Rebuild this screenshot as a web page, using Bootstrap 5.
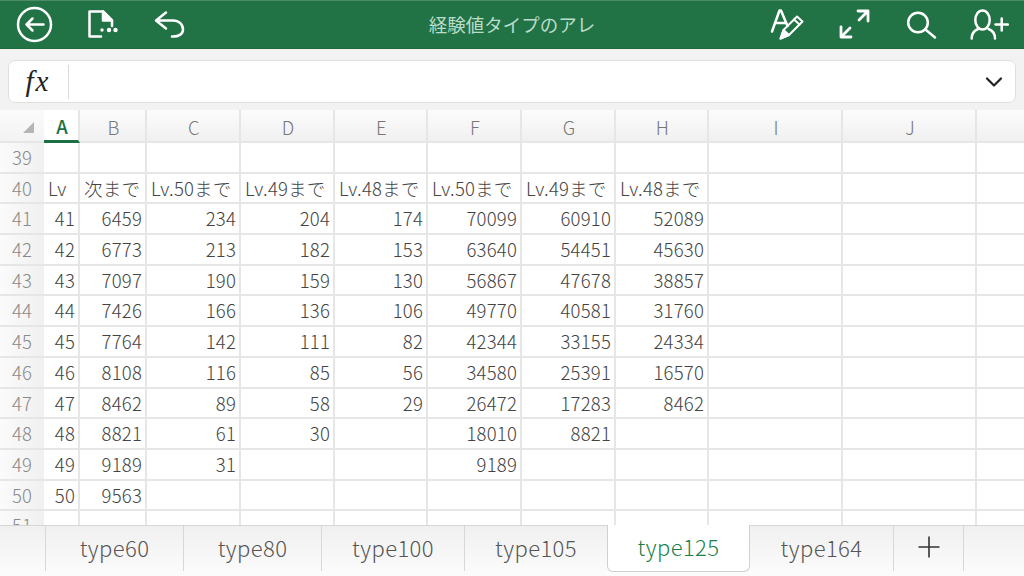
<!DOCTYPE html>
<html lang="ja">
<head>
<meta charset="utf-8">
<title>経験値タイプのアレ</title>
<link href="https://cdn.jsdelivr.net/npm/bootstrap@5.3.0/dist/css/bootstrap.min.css" rel="stylesheet">
<style>
html,body{height:576px;overflow:hidden;background:#fff}
body{font-family:"Noto Sans CJK JP","Noto Sans",sans-serif;font-weight:300;color:#444}
.xl-top{height:49px;background:#217346;border-top:1px solid #4d8c69;border-bottom:1px solid #1d6b3e;display:grid;grid-template-columns:1fr auto 1fr;align-items:center;flex:none}
.xl-left{gap:28px;padding-left:14px}
.xl-right{gap:27px;padding-right:15px}
.xl-ico{width:40px;height:40px;display:block;fill:none;stroke:#fff;stroke-width:2.5;stroke-linecap:round;stroke-linejoin:round}
.xl-title{font-size:18.5px;color:#bcdcc9;font-weight:400;line-height:1}
.xl-fbar{height:61px;background:#f2f2f2;padding:11px 8px 7px;flex:none}
.xl-fbox{height:43px;background:#fff;border:1px solid #dfdfdf;border-radius:7px}
.xl-fx{width:60px;height:34px;border-right:1px solid #d9d9d9;font:italic 29px/33px "Liberation Serif",serif;letter-spacing:2px;color:#222;text-align:center;padding-right:1px}
.xl-chev{width:20px;height:12px;margin-right:11px;fill:none;stroke:#222;stroke-width:2.2;stroke-linecap:round;stroke-linejoin:round}
.xl-grid{height:415px;overflow:hidden;flex:none}
.xl-sheet{table-layout:fixed;width:1100px;border-collapse:separate;border-spacing:0;margin:0;--bs-table-bg:transparent;font-size:18.5px;letter-spacing:.2px;color:#444}
.xl-sheet td,.xl-sheet th{height:30.7px;padding:0 3px 0 4px;border:0;border-right:2px solid #e6e6e6;border-bottom:2px solid #e6e6e6;line-height:28px;white-space:nowrap;overflow:hidden;font-weight:300;color:#444;box-shadow:none}
.xl-sheet thead th{height:33px;background:linear-gradient(#fcfcfc,#f0f0f0);color:#777;text-align:center;font-size:18.5px;padding:0 0 0 2px}
.xl-sheet thead th.xl-on{background:#fff;color:#1d7044;font-weight:500;border-bottom:3px solid #1d7044}
.xl-sheet tbody th{background:linear-gradient(90deg,#fbfbfb,#f0f0f0);color:#8a8a8a;text-align:center;border-right:0;padding:0;font-size:18.5px}
.xl-sheet thead th:first-child{border-right:0;background:linear-gradient(#fbfbfb,#f3f3f3);position:relative}
.xl-corner{position:absolute;left:23px;bottom:8px;width:0;height:0;border-style:solid;border-width:0 0 11px 11px;border-color:transparent transparent #b5b5b5 transparent}
.xl-c0{width:44px}.xl-c1{width:36px}.xl-c2{width:67px}.xl-c3,.xl-c4,.xl-c6,.xl-c7{width:94px}.xl-c5,.xl-c8{width:93px}.xl-c9{width:134px}.xl-c10{width:134px}.xl-c11{width:134px}
.xl-sheet td.xl-n{text-align:right}
.xl-tabs{height:51px;flex:none;background:linear-gradient(#f0f0f0,#fbfbfb 92%);border-top:1px solid #d6d6d6;padding-left:45px;position:relative;font-size:22px;color:#555;align-items:stretch}
.xl-tab{width:138px;height:45px;border-left:1px solid #d8d8d8;display:flex;align-items:center;justify-content:center;font-weight:300;letter-spacing:.4px;padding-bottom:3px}
.xl-w2{width:143px}
.xl-tab.xl-act{width:143px;height:47px;margin-top:-1px;background:#fff;color:#188048;font-weight:300;border:1px solid #d0d0d0;border-top:0;border-radius:0 0 6px 6px}
.xl-tab.xl-act + .xl-tab{border-left:0}
.xl-add{width:71px;border-right:1px solid #d8d8d8}
.xl-plus{width:24px;height:24px;stroke:#333;stroke-width:1.6;fill:none}
</style>
</head>
<body class="d-flex flex-column">
<header class="xl-top">
  <div class="d-flex xl-left">
    <svg class="xl-ico" viewBox="0 0 40 40"><circle cx="20.500" cy="19.500" r="16.500"/><path d="M29.500 19.500H12.500M18.500 13.500l-6 6 6 6"/></svg>
    <svg class="xl-ico" viewBox="0 0 40 40"><path d="M19 31.500H7.500V6.500H21L30 15.500V21"/><path d="M21 6.500V15.500H30Z" fill="#fff"/><circle cx="20" cy="25" r="1.700" fill="#fff" stroke="none"/><circle cx="27" cy="25" r="2.200" fill="#fff" stroke="none"/><circle cx="33.500" cy="25" r="2.200" fill="#fff" stroke="none"/></svg>
    <svg class="xl-ico" viewBox="0 0 40 40"><path d="M16 7.500L6 15.500l10 8M6 15.500H23c6 0 10 4 10 9 0 4.500-4.500 7.500-11 7"/></svg>
  </div>
  <div class="xl-title text-center">経験値タイプのアレ</div>
  <div class="d-flex justify-content-end xl-right">
    <svg class="xl-ico" viewBox="0 0 40 40"><path d="M4 26.500L11.500 5.500h1.500L19.500 21M7 18h10"/><path d="M12.500 33.500L15.500 25L29 11.500L34.500 16.500L21 30Z" stroke-width="2"/><path d="M12.500 33.500L15.500 25L21 30Z" fill="#fff" stroke-width="2"/><path d="M26 14.500l5.500 5" stroke-width="2"/></svg>
    <svg class="xl-ico" viewBox="0 0 40 40"><path d="M23 6H33V16M33 6L24 15M6 22V32H16M6 32L15 23" stroke-width="2.800"/></svg>
    <svg class="xl-ico" viewBox="0 0 40 40"><circle cx="16" cy="17.500" r="9.800"/><path d="M23.500 24.500L33 32.500"/></svg>
    <svg class="xl-ico" viewBox="0 0 40 40"><ellipse cx="13.500" cy="15" rx="7.200" ry="9.500"/><path d="M2.700 33.500c0-5.500 2.500-8 6.500-9.500M26 33.500c0-5.500-2.500-8-6.500-9.500"/><path d="M26.500 19.500h12.500M32.700 13.500v12"/></svg>
  </div>
</header>
<div class="xl-fbar">
  <div class="xl-fbox d-flex align-items-center justify-content-between">
    <div class="xl-fx">fx</div>
    <svg class="xl-chev" viewBox="0 0 20 12"><path d="M3 2.500l7 7 7-7"/></svg>
  </div>
</div>
<div class="xl-grid">
<table class="table xl-sheet">
<colgroup><col class="xl-c0"><col class="xl-c1"><col class="xl-c2"><col class="xl-c3"><col class="xl-c4"><col class="xl-c5"><col class="xl-c6"><col class="xl-c7"><col class="xl-c8"><col class="xl-c9"><col class="xl-c10"><col class="xl-c11"></colgroup>
<thead><tr><th><span class="xl-corner"></span></th><th class="xl-on">A</th><th>B</th><th>C</th><th>D</th><th>E</th><th>F</th><th>G</th><th>H</th><th>I</th><th>J</th><th></th></tr></thead>
<tbody>
<tr><th>39</th><td></td><td></td><td></td><td></td><td></td><td></td><td></td><td></td><td></td><td></td><td></td></tr>
<tr><th>40</th><td>Lv</td><td>次まで</td><td>Lv.50まで</td><td>Lv.49まで</td><td>Lv.48まで</td><td>Lv.50まで</td><td>Lv.49まで</td><td>Lv.48まで</td><td></td><td></td><td></td></tr>
<tr><th>41</th><td class="xl-n">41</td><td class="xl-n">6459</td><td class="xl-n">234</td><td class="xl-n">204</td><td class="xl-n">174</td><td class="xl-n">70099</td><td class="xl-n">60910</td><td class="xl-n">52089</td><td></td><td></td><td></td></tr>
<tr><th>42</th><td class="xl-n">42</td><td class="xl-n">6773</td><td class="xl-n">213</td><td class="xl-n">182</td><td class="xl-n">153</td><td class="xl-n">63640</td><td class="xl-n">54451</td><td class="xl-n">45630</td><td></td><td></td><td></td></tr>
<tr><th>43</th><td class="xl-n">43</td><td class="xl-n">7097</td><td class="xl-n">190</td><td class="xl-n">159</td><td class="xl-n">130</td><td class="xl-n">56867</td><td class="xl-n">47678</td><td class="xl-n">38857</td><td></td><td></td><td></td></tr>
<tr><th>44</th><td class="xl-n">44</td><td class="xl-n">7426</td><td class="xl-n">166</td><td class="xl-n">136</td><td class="xl-n">106</td><td class="xl-n">49770</td><td class="xl-n">40581</td><td class="xl-n">31760</td><td></td><td></td><td></td></tr>
<tr><th>45</th><td class="xl-n">45</td><td class="xl-n">7764</td><td class="xl-n">142</td><td class="xl-n">111</td><td class="xl-n">82</td><td class="xl-n">42344</td><td class="xl-n">33155</td><td class="xl-n">24334</td><td></td><td></td><td></td></tr>
<tr><th>46</th><td class="xl-n">46</td><td class="xl-n">8108</td><td class="xl-n">116</td><td class="xl-n">85</td><td class="xl-n">56</td><td class="xl-n">34580</td><td class="xl-n">25391</td><td class="xl-n">16570</td><td></td><td></td><td></td></tr>
<tr><th>47</th><td class="xl-n">47</td><td class="xl-n">8462</td><td class="xl-n">89</td><td class="xl-n">58</td><td class="xl-n">29</td><td class="xl-n">26472</td><td class="xl-n">17283</td><td class="xl-n">8462</td><td></td><td></td><td></td></tr>
<tr><th>48</th><td class="xl-n">48</td><td class="xl-n">8821</td><td class="xl-n">61</td><td class="xl-n">30</td><td></td><td class="xl-n">18010</td><td class="xl-n">8821</td><td></td><td></td><td></td><td></td></tr>
<tr><th>49</th><td class="xl-n">49</td><td class="xl-n">9189</td><td class="xl-n">31</td><td></td><td></td><td class="xl-n">9189</td><td></td><td></td><td></td><td></td><td></td></tr>
<tr><th>50</th><td class="xl-n">50</td><td class="xl-n">9563</td><td></td><td></td><td></td><td></td><td></td><td></td><td></td><td></td><td></td></tr>
<tr><th>51</th><td></td><td></td><td></td><td></td><td></td><td></td><td></td><td></td><td></td><td></td><td></td></tr>
</tbody>
</table>
</div>
<nav class="xl-tabs d-flex">
  <div class="xl-tab">type60</div>
  <div class="xl-tab">type80</div>
  <div class="xl-tab xl-w2">type100</div>
  <div class="xl-tab xl-w2">type105</div>
  <div class="xl-tab xl-act">type125</div>
  <div class="xl-tab xl-w2">type164</div>
  <div class="xl-tab xl-add"><svg class="xl-plus" viewBox="0 0 24 24"><path d="M12 1.500v21M1.500 12h21"/></svg></div>
</nav>
<script src="https://cdn.jsdelivr.net/npm/bootstrap@5.3.0/dist/js/bootstrap.bundle.min.js"></script>
</body>
</html>
